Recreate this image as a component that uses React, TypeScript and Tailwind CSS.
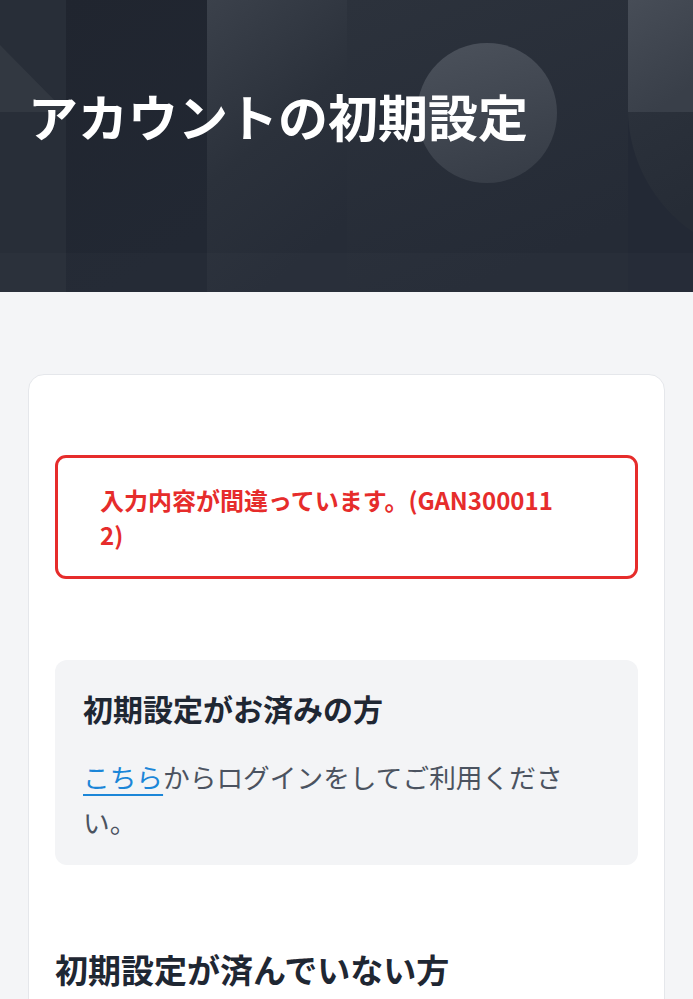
import React from "react";

function HeaderBackground() {
  return (
    <svg
      className="absolute inset-0 h-full w-full"
      viewBox="0 0 693 292"
      preserveAspectRatio="none"
      aria-hidden="true"
    >
      <defs>
        <linearGradient id="base" x1="0" y1="0" x2="0.3" y2="1">
          <stop offset="0" stopColor="#2a303a" />
          <stop offset="1" stopColor="#252b36" />
        </linearGradient>
        <linearGradient id="colA" x1="0" y1="0" x2="0.3" y2="1">
          <stop offset="0" stopColor="#20252f" />
          <stop offset="1" stopColor="#222833" />
        </linearGradient>
        <linearGradient id="colB" x1="0" y1="0" x2="0.4" y2="1">
          <stop offset="0" stopColor="#3b414b" />
          <stop offset="0.55" stopColor="#2b313b" />
          <stop offset="1" stopColor="#262c37" />
        </linearGradient>
        <linearGradient id="colC" x1="0" y1="0" x2="0.4" y2="1">
          <stop offset="0" stopColor="#2c323c" />
          <stop offset="1" stopColor="#252b36" />
        </linearGradient>
        <linearGradient id="colD" x1="0" y1="0" x2="0.4" y2="1">
          <stop offset="0" stopColor="#474d57" />
          <stop offset="1" stopColor="#393f49" />
        </linearGradient>
        <linearGradient id="circ" x1="0.3" y1="0" x2="0.6" y2="1">
          <stop offset="0" stopColor="#4a505a" />
          <stop offset="1" stopColor="#373d47" />
        </linearGradient>
        <linearGradient id="arc" x1="0" y1="0" x2="0.3" y2="1">
          <stop offset="0" stopColor="#2b313b" />
          <stop offset="1" stopColor="#262c36" />
        </linearGradient>
      </defs>
      <rect x="0" y="0" width="693" height="292" fill="url(#base)" />
      <rect x="0" y="0" width="66" height="292" fill="#282e38" />
      <polygon points="0,45 66,112 0,112" fill="#323841" />
      <rect x="66" y="0" width="141" height="292" fill="url(#colA)" />
      <rect x="207" y="0" width="140" height="292" fill="url(#colB)" />
      <rect x="347" y="0" width="281" height="292" fill="url(#colC)" />
      <rect x="628" y="0" width="65" height="112" fill="url(#colD)" />
      <rect x="628" y="112" width="65" height="180" fill="#232935" />
      <path d="M628,112 L693,112 L693,232 A150,150 0 0 1 628,112 Z" fill="url(#arc)" />
      <circle cx="487" cy="113" r="70" fill="url(#circ)" />
      <rect x="0" y="253" width="693" height="39" fill="#ffffff" fillOpacity="0.015" />
    </svg>
  );
}

export default function App() {
  return (
    <div
      className="min-h-[999px] bg-[#f4f5f7]"
      style={{ fontFamily: '"Noto Sans CJK JP", "Noto Sans", sans-serif' }}
    >
      <header className="relative h-[292px] overflow-hidden">
        <HeaderBackground />
        <h1 className="relative px-[28px] pt-[78px] text-[50px] font-bold leading-[75px] text-white">
          アカウントの初期設定
        </h1>
      </header>

      <main className="px-[28px] pt-[82px]">
        <section className="rounded-[16px] border border-[#e5e7eb] bg-white px-[26px] pb-10 pt-[80px]">
          <div className="rounded-[11px] border-[3px] border-[#e62c2b] py-6 pl-[42px] pr-[60px]">
            <p className="break-all text-[24px] font-bold leading-[35px] text-[#e62c2b]">
              入力内容が間違っています。(GAN3000112)
            </p>
          </div>

          <div className="mt-[81px] rounded-[12px] bg-[#f3f4f6] px-[28px] pb-[21px] pt-[22px]">
            <h2 className="text-[30px] font-bold leading-[52px] text-[#1f2733]">
              初期設定がお済みの方
            </h2>
            <p className="mt-[20px] text-[26.7px] leading-[45px] text-[#4b5360]">
              <a
                href="#"
                className="text-[#1b86d8] underline decoration-2 underline-offset-[6px]"
              >
                こちら
              </a>
              からログインをしてご利用ください。
            </p>
          </div>

          <h2 className="mt-[80px] text-[33px] font-bold leading-[48px] text-[#1f2733]">
            初期設定が済んでいない方
          </h2>
        </section>
      </main>
    </div>
  );
}
